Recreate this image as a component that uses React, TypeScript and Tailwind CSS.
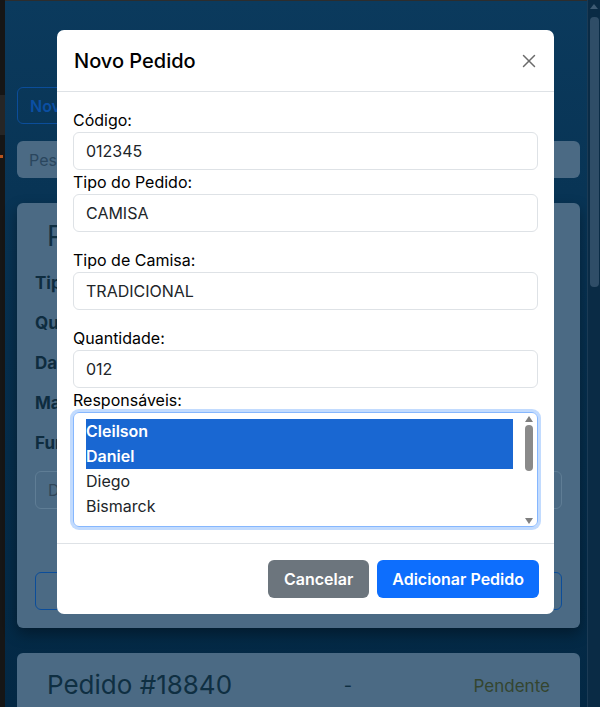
import React from 'react';
import { X } from 'lucide-react';

const font = { fontFamily: 'Inter, "Noto Sans", sans-serif' };

const Field = ({ label, value, last }: { label: string; value: string; last?: boolean }) => (
  <div className={last ? '' : 'mb-4'}>
    <label className="block text-[16px] leading-6 text-black">{label}</label>
    <div className="h-[38px] border border-[#dee2e6] rounded-[6px] px-3 flex items-center text-[16px] text-[#212529]">
      {value}
    </div>
  </div>
);

const PedidoCard = () => (
  <div className="bg-[#4b6a84] rounded-[6px] h-[425px] px-[18px] pt-[16px] shadow-[0_6px_14px_rgba(0,0,0,0.35)] flex flex-col">
    <h3 className="text-[28px] text-[#0f2f42] pl-[12px] leading-[34px]">Pedido #18841</h3>
    <div className="mt-[18px] flex flex-col gap-[16px] text-[17px] font-bold text-[#0e2c3f] leading-6">
      <div>Tipo do Pedido:</div>
      <div>Quantidade:</div>
      <div>Data:</div>
      <div>Material:</div>
      <div>Funcionários:</div>
    </div>
    <div className="mt-[16px] h-[38px] border border-[#5f7d95] rounded-[6px] px-3 flex items-center text-[#30475a] text-[16px]">
      Digite um comentário
    </div>
    <div className="mt-[63px] h-[38px] border border-[#0b4d9a] rounded-[6px]" />
  </div>
);

const App: React.FC = () => {
  return (
    <div className="w-[600px] h-[707px] relative overflow-hidden flex" style={font}>
      <div className="w-[5px] bg-[#161616] flex flex-col">
        <div className="h-[95px]" />
        <div className="h-[40px] bg-[#262626]" />
        <div className="h-[20px]" />
        <div className="h-[3px] bg-[#b8531c] w-[3px]" />
        <div className="flex-1" />
      </div>

      <div className="flex-1 bg-gradient-to-b from-[#0b3a5d] via-[#062f4e] to-[#032844] pl-[12px] pr-[7px] pt-[86px] flex flex-col border-t border-[#2d2d2d]">
        <div className="shrink-0 w-[150px] h-[37px] border border-[#0b4d9a] rounded-[6px] text-[#0b4fa3] text-[16px] font-semibold flex items-center px-[12px]">
          Novo Pedido
        </div>
        <div className="shrink-0 mt-[17px] h-[37px] bg-[#4b6a84] rounded-[6px] px-[12px] flex items-center text-[#2a465e] text-[16px]">
          Pesquisar pedido...
        </div>
        <div className="shrink-0 mt-[25px]">
          <PedidoCard />
        </div>
        <div className="shrink-0 mt-[25px] bg-[#4b6a84] rounded-[6px] h-[80px] px-[30px] pt-[15px] flex items-start justify-between">
          <span className="text-[26px] text-[#0f2f42] leading-[34px]">Pedido #18840</span>
          <span className="text-[18px] text-[#0f2f42] leading-[36px] mr-[10px]">-</span>
          <span className="text-[17px] text-[#34452f] leading-[36px]">Pendente</span>
        </div>
      </div>

      <div className="w-[13px] bg-[#0a2b45] flex flex-col items-center pt-[4px] border-l border-[#1c3b55]">
        <div className="w-0 h-0 border-l-[4px] border-r-[4px] border-b-[5px] border-l-transparent border-r-transparent border-b-[#3e5b74]" />
        <div className="mt-[8px] w-[9px] h-[270px] rounded-[4px] bg-[#2f4d67]" />
      </div>

      {/* modal */}
      <div className="absolute left-[57px] top-[30px] w-[497px] bg-white rounded-[7px] text-[#212529]">
        <div className="h-[62px] border-b border-[#dee2e6] flex items-center justify-between pl-[17px] pr-[14px]">
          <h5 className="text-[20px] font-medium text-black leading-[30px]">Novo Pedido</h5>
          <X className="w-[22px] h-[22px] text-[#6b6b6b]" strokeWidth={1.6} />
        </div>
        <div className="p-4">
          <Field label="Código:" value="012345" last />
          <Field label="Tipo do Pedido:" value="CAMISA" />
          <Field label="Tipo de Camisa:" value="TRADICIONAL" />
          <Field label="Quantidade:" value="012" last />
          <label className="block text-[16px] leading-6 text-black">Responsáveis:</label>
          <div className="h-[115px] border border-[#86b7fe] rounded-[6px] shadow-[0_0_0_3px_rgba(13,110,253,0.25)] flex pl-[12px] pt-[6px] pr-[2px] overflow-hidden">
            <div className="flex-1 flex flex-col text-[16px] leading-[25px]">
              <div className="bg-[#1967d2] text-white font-semibold">Cleilson</div>
              <div className="bg-[#1967d2] text-white font-semibold">Daniel</div>
              <div>Diego</div>
              <div>Bismarck</div>
            </div>
            <div className="w-[12px] ml-[10px] flex flex-col items-center -mt-[3px] pb-[2px]">
              <div className="w-0 h-0 border-l-[4px] border-r-[4px] border-b-[6px] border-l-transparent border-r-transparent border-b-[#7f7f7f]" />
              <div className="mt-[3px] w-[8px] h-[46px] rounded-[4px] bg-[#8a8a8a]" />
              <div className="flex-1" />
              <div className="w-0 h-0 border-l-[4px] border-r-[4px] border-t-[6px] border-l-transparent border-r-transparent border-t-[#7f7f7f]" />
            </div>
          </div>
        </div>
        <div className="border-t border-[#dee2e6] px-[15px] py-[16px] flex justify-end gap-[8px]">
          <button className="h-[38px] px-[16px] rounded-[6px] bg-[#6c757d] text-white text-[16px] font-semibold">Cancelar</button>
          <button className="h-[38px] px-[15px] rounded-[6px] bg-[#0d6efd] text-white text-[16px] font-semibold">Adicionar Pedido</button>
        </div>
      </div>
    </div>
  );
};

export default App;
